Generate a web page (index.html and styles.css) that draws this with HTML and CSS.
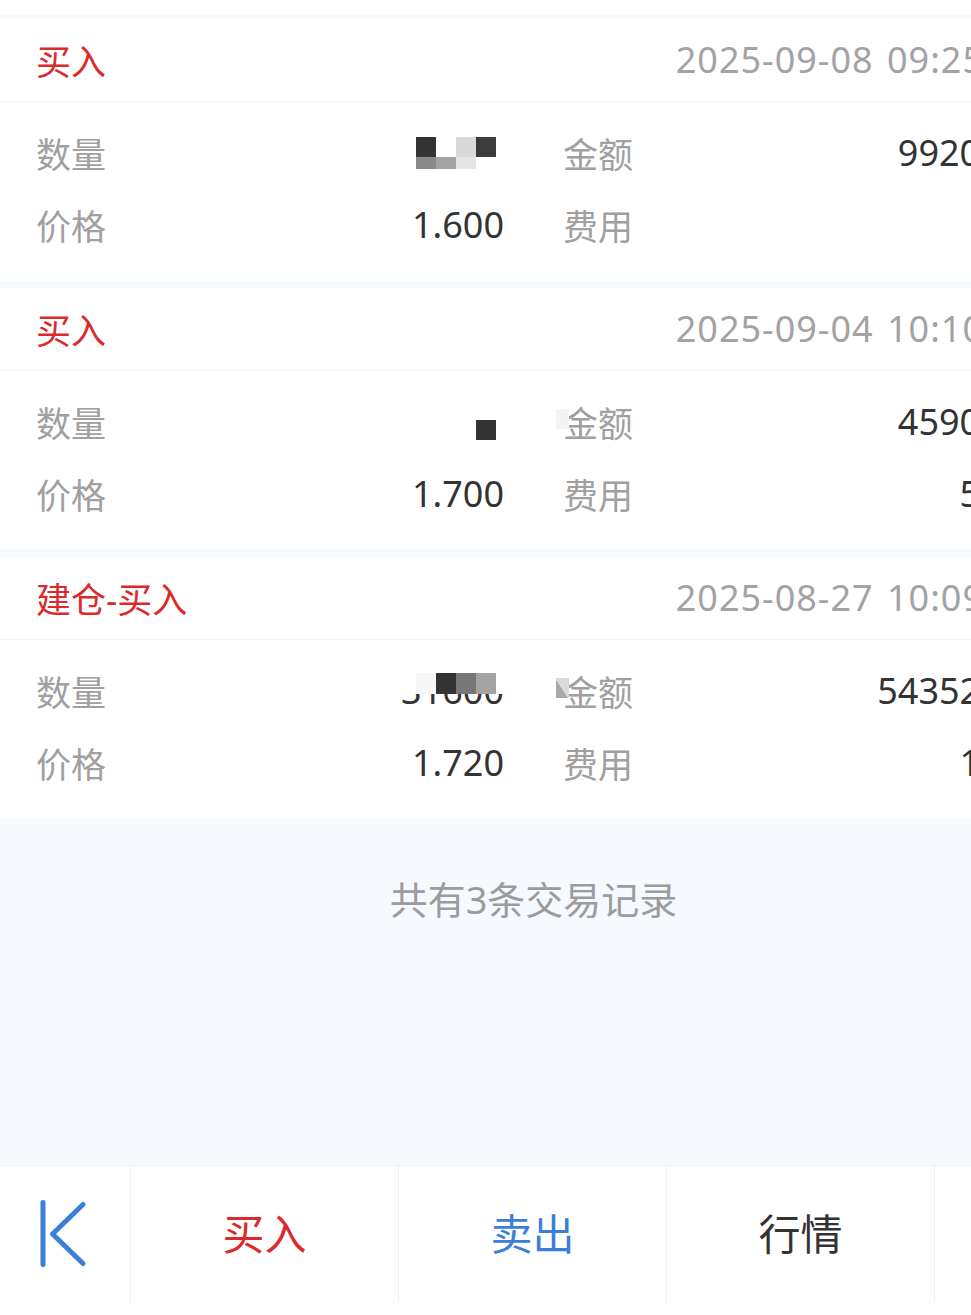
FILE: index.html
```html
<!DOCTYPE html>
<html lang="zh-CN">
<head>
    <meta charset="UTF-8">
    <meta name="viewport" content="width=device-width, initial-scale=1.0">
    <title>交易记录</title>
    <link rel="stylesheet" href="styles.css">
</head>
<body>
    <div class="page">
        <div class="top-stub"></div>

        <div class="record-list">
            <!-- record 1 -->
            <div class="record">
                <div class="record-head">
                    <span class="record-type">买入</span>
                    <span class="record-time">2025-09-08 09:25</span>
                </div>
                <div class="record-body">
                    <div class="field">
                        <span class="label">数量</span>
                        <span class="value">
                            <span class="mosaic mosaic-a">
                                <i class="c-dark"></i><i class="c-white"></i><i class="c-light"></i><i class="c-dark2"></i>
                                <i class="c-mid"></i><i class="c-mid2"></i><i class="c-pale"></i><i class="c-white"></i>
                            </span>
                        </span>
                    </div>
                    <div class="field">
                        <span class="label">金额</span>
                        <span class="value">9920.00</span>
                    </div>
                    <div class="field">
                        <span class="label">价格</span>
                        <span class="value">1.600</span>
                    </div>
                    <div class="field">
                        <span class="label">费用</span>
                        <span class="value"></span>
                    </div>
                </div>
            </div>

            <!-- record 2 -->
            <div class="record">
                <div class="record-head">
                    <span class="record-type">买入</span>
                    <span class="record-time">2025-09-04 10:10</span>
                </div>
                <div class="record-body">
                    <div class="field">
                        <span class="label">数量</span>
                        <span class="value">
                            <span class="mosaic mosaic-b">
                                <i class="c-white"></i><i class="c-white"></i><i class="c-white"></i><i class="c-white"></i>
                                <i class="c-white"></i><i class="c-white"></i><i class="c-white"></i><i class="c-dark"></i>
                            </span>
                        </span>
                    </div>
                    <div class="field">
                        <span class="label"><span class="patch patch-faint"></span>金额</span>
                        <span class="value">4590.00</span>
                    </div>
                    <div class="field">
                        <span class="label">价格</span>
                        <span class="value">1.700</span>
                    </div>
                    <div class="field">
                        <span class="label">费用</span>
                        <span class="value">5.00</span>
                    </div>
                </div>
            </div>

            <!-- record 3 -->
            <div class="record">
                <div class="record-head">
                    <span class="record-type">建仓-买入</span>
                    <span class="record-time">2025-08-27 10:09</span>
                </div>
                <div class="record-body">
                    <div class="field">
                        <span class="label">数量</span>
                        <span class="value covered">
                            31600
                            <span class="mosaic mosaic-c">
                                <i class="c-white"></i><i class="c-snow"></i><i class="c-dark"></i><i class="c-grey"></i><i class="c-mid2"></i><i class="c-white"></i>
                            </span>
                        </span>
                    </div>
                    <div class="field">
                        <span class="label"><span class="patch patch-grey"></span>金额</span>
                        <span class="value">54352.00</span>
                    </div>
                    <div class="field">
                        <span class="label">价格</span>
                        <span class="value">1.720</span>
                    </div>
                    <div class="field">
                        <span class="label">费用</span>
                        <span class="value">1.00</span>
                    </div>
                </div>
            </div>
        </div>

        <div class="summary">共有3条交易记录</div>

        <nav class="action-bar">
            <div class="action action-k">
                <svg width="50" height="70" viewBox="0 0 50 70" fill="none" stroke="#3a7fd8" stroke-width="5" stroke-linecap="round" stroke-linejoin="round">
                    <path d="M5 3.5V65.5"/>
                    <path d="M45 5.5L14.5 35L45 64.5"/>
                </svg>
            </div>
            <div class="action action-buy">买入</div>
            <div class="action action-sell">卖出</div>
            <div class="action action-quote">行情</div>
            <div class="action"></div>
        </nav>
    </div>
</body>
</html>
```

FILE: styles.css
```css
* {
    margin: 0;
    padding: 0;
    box-sizing: border-box;
}

html, body {
    width: 971px;
    height: 1315px;
    overflow: hidden;
}

body {
    background: #f6f9fe;
    font-family: "Noto Sans", "Noto Sans CJK SC", sans-serif;
    color: #333;
}

.page {
    width: 1067px;
    height: 1315px;
    display: flex;
    flex-direction: column;
}

.top-stub {
    height: 15px;
    background: #fff;
    margin-bottom: 4px;
    flex-shrink: 0;
}

.record-list {
    display: flex;
    flex-direction: column;
    gap: 7px;
}

.record {
    background: #fff;
    height: 262px;
}

.record-head {
    height: 83px;
    display: flex;
    align-items: center;
    justify-content: space-between;
    padding: 0 83px 2px 36px;
    border-bottom: 1px solid #f2f3f6;
}

.record-type {
    color: #dc2a2c;
    font-size: 35px;
}

.record-time {
    color: #a3a3a3;
    font-size: 36px;
    letter-spacing: 1px;
    word-spacing: 3px;
}

.record-body {
    display: grid;
    grid-template-columns: 1fr 1fr;
    grid-auto-rows: 72px;
    column-gap: 59px;
    padding: 14px 36px 20px;
}

.field {
    display: flex;
    align-items: center;
    justify-content: space-between;
}

.label {
    position: relative;
    font-size: 35px;
    color: #a0a0a0;
}

.value {
    position: relative;
    font-size: 36px;
    color: #333;
}

/* pixelated quantity */
.mosaic {
    display: grid;
    grid-template-columns: repeat(4, 20px);
    margin-right: 8px;
}

.mosaic i {
    display: block;
}

.mosaic-a {
    grid-template-rows: 20px 12px;
    transform: translateY(1px);
}

.mosaic-b {
    grid-template-rows: 9px 20px;
    transform: translateY(4px);
}

.value.covered .mosaic {
    position: absolute;
    right: 0;
    top: 50%;
    margin-top: -17px;
    grid-template-columns: 19px repeat(4, 20px) 8px;
    grid-template-rows: 21px;
    margin-right: 0;
}

.c-dark { background: #333; }
.c-dark2 { background: #3b3b3b; }
.c-grey { background: #777; }
.c-mid { background: #8a8a8a; }
.c-mid2 { background: #a3a3a3; }
.c-light { background: #dadada; }
.c-pale { background: #e6e6e6; }
.c-snow { background: #f7f7f7; }
.c-white { background: #fff; }

.patch {
    position: absolute;
    left: -7px;
    top: 50%;
    width: 13px;
    height: 20px;
    margin-top: -12px;
}

.patch-faint {
    background: #f4f4f4;
}

.patch-grey {
    background: linear-gradient(to top right, #a9a9a9 45%, #dadada 46%);
}

.summary {
    flex: 1;
    text-align: center;
    padding-top: 60px;
    font-size: 38px;
    line-height: 40px;
    color: #9c9c9c;
}

.action-bar {
    height: 150px;
    flex-shrink: 0;
    display: grid;
    grid-template-columns: 131px 268px 268px 268px 132px;
    background: #fff;
    border-top: 1px solid #eef0f4;
    padding-bottom: 13px;
}

.action {
    display: flex;
    align-items: center;
    justify-content: center;
    font-size: 42px;
    border-right: 1px solid #f0f0f2;
}

.action:last-child {
    border-right: none;
}

.action-k svg {
    margin-right: 5px;
}

.action-buy,
.action-sell,
.action-quote {
    padding-bottom: 6px;
}

.action-buy {
    color: #dc2a2c;
}

.action-sell {
    color: #3a7fd8;
}

.action-quote {
    color: #333;
}
```
